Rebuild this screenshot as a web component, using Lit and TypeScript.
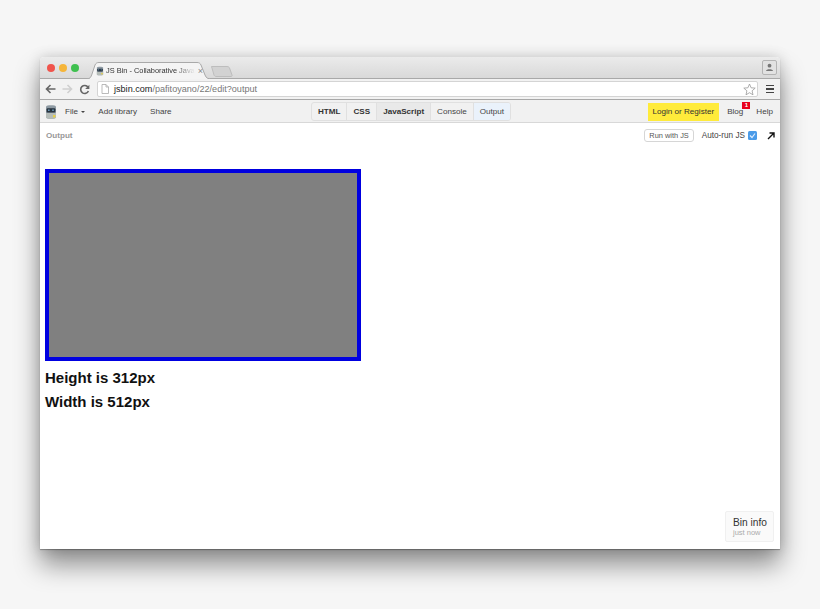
import { LitElement, html, css } from "lit";
import { customElement } from "lit/decorators.js";

const jsbinLogo = (w: number, h: number) => html`
  <svg width=${w} height=${h} viewBox="0 0 12 16">
    <path d="M1 2.5C1 .8 11 .8 11 2.5V13.5C11 15.3 1 15.3 1 13.5Z" fill="#8e9aa3"/>
    <path d="M1 9H11V13.5C11 15.3 1 15.3 1 13.5Z" fill="#b5bcb8"/>
    <rect x="1.6" y="4.2" width="8.8" height="4.4" rx="1" fill="#27333f"/>
    <rect x="3" y="5.6" width="1.6" height="1.2" fill="#7fb4d8"/>
    <rect x="7.2" y="5.6" width="1.6" height="1.2" fill="#7fb4d8"/>
    <rect x="8" y="11" width="2.4" height="2.4" fill="#e6cf4a"/>
  </svg>
`;

@customElement("app-root")
export class AppRoot extends LitElement {
  static styles = css`
    :host {
      display: block;
      height: 609px;
      overflow: hidden;
      background: #f6f6f6;
      font-family: "Liberation Sans", Arial, sans-serif;
      color: #333;
      padding: 57px 40px 0;
      box-sizing: border-box;
    }

    .window {
      width: 740px;
      height: 492px;
      display: flex;
      flex-direction: column;
      background: #fff;
      border-radius: 4px 4px 0 0;
      box-shadow:
        0 1px 1px rgba(0, 0, 0, 0.3),
        0 16px 26px 0 rgba(0, 0, 0, 0.42),
        0 0 14px rgba(0, 0, 0, 0.16);
    }

    /* chrome tab strip */
    .tabstrip {
      height: 22px;
      flex: none;
      display: flex;
      align-items: flex-end;
      background: linear-gradient(#ebebeb, #d9d9d9);
      border-radius: 4px 4px 0 0;
      border-bottom: 1px solid #a9a9a9;
      box-sizing: border-box;
    }

    .lights {
      display: flex;
      gap: 4px;
      margin: 0 0 0 7px;
      align-self: flex-start;
      padding-top: 7px;
    }

    .light {
      width: 8px;
      height: 8px;
      border-radius: 50%;
    }

    .tab {
      position: relative;
      width: 125px;
      height: 17px;
      margin-left: 8px;
      margin-bottom: -1px;
      flex: none;
      display: flex;
      align-items: center;
      font-size: 7.4px;
      color: #333;
    }

    .tab svg.shape {
      position: absolute;
      inset: 0;
    }

    .tab-inner {
      position: relative;
      display: flex;
      align-items: center;
      padding-left: 9px;
      width: 100%;
      box-sizing: border-box;
    }

    .tab-title {
      margin-left: 2px;
      white-space: nowrap;
      -webkit-mask-image: linear-gradient(90deg, #000 78%, transparent);
      mask-image: linear-gradient(90deg, #000 78%, transparent);
    }

    .tab-x {
      font-size: 9px;
      color: #888;
      margin-left: 3px;
    }

    .newtab {
      margin-left: -1px;
      margin-bottom: 1px;
    }

    .profile {
      margin-left: auto;
      margin-right: 3px;
      align-self: flex-start;
      margin-top: 3px;
      width: 15px;
      height: 15px;
      box-sizing: border-box;
      border: 1px solid #b4b4b4;
      border-radius: 2px;
      background: #e2e2e2;
      display: grid;
      place-items: center;
    }

    /* address bar */
    .toolbar {
      height: 21px;
      flex: none;
      display: flex;
      align-items: center;
      background: #f2f2f2;
      border-bottom: 1px solid #a8a8a8;
      box-sizing: border-box;
      padding-left: 5px;
    }

    .nav {
      display: flex;
      align-items: center;
      gap: 6px;
      width: 52px;
      flex: none;
    }

    .omnibox {
      width: 661px;
      height: 16px;
      flex: none;
      background: #fff;
      border: 1px solid #d4d4d4;
      box-sizing: border-box;
      border-radius: 2px;
      display: flex;
      align-items: center;
      padding-left: 3px;
      font-size: 9.1px;
      color: #777;
      gap: 5px;
    }

    .omnibox b {
      font-weight: normal;
      color: #222;
    }

    .omnibox .star {
      margin-left: auto;
      margin-right: 1px;
    }

    .menu {
      margin-left: 8px;
      display: flex;
      flex-direction: column;
      gap: 2px;
    }

    .menu i {
      display: block;
      width: 8px;
      height: 1.5px;
      background: #444;
    }

    /* jsbin bar */
    .jsbar {
      height: 23px;
      flex: none;
      display: flex;
      align-items: center;
      background: #f1f1f1;
      border-bottom: 1px solid #d8d8d8;
      box-sizing: border-box;
      padding-top: 1px;
      font-size: 8.1px;
      color: #444;
    }

    .logo {
      margin-left: 5px;
      display: flex;
    }

    .left {
      display: flex;
      gap: 13px;
      margin-left: 8px;
      width: 246px;
    }

    .file-caret {
      display: inline-block;
      border: 2px solid transparent;
      border-top: 2.5px solid #444;
      border-bottom: 0;
      vertical-align: middle;
      margin-left: 1px;
    }

    .panels {
      display: flex;
      height: 19px;
      border: 1px solid #e0e0e0;
      border-radius: 3px;
      box-sizing: border-box;
      background: #f1f1f1;
      overflow: hidden;
    }

    .panel {
      display: flex;
      align-items: center;
      padding: 0 6px;
      border-left: 1px solid #e0e0e0;
    }

    .panel:first-child {
      border-left: 0;
    }

    .panel.on {
      font-weight: bold;
      color: #333;
    }

    .panel.on.shade {
      background: #e9e9e9;
    }

    .panel.out {
      background: #eaf2fb;
    }

    .right {
      margin-left: auto;
      display: flex;
      align-items: center;
      padding-right: 7px;
    }

    .login {
      height: 18px;
      display: flex;
      align-items: center;
      padding: 0 5px;
      background: #ffeb3b;
      color: #333;
      margin-right: 8px;
    }

    .blog {
      position: relative;
      margin-right: 13px;
    }

    .badge {
      position: absolute;
      top: -5px;
      right: -7px;
      width: 8px;
      height: 7px;
      background: #e8001c;
      color: #fff;
      font-size: 6px;
      line-height: 7px;
      text-align: center;
      font-weight: bold;
    }

    /* output pane */
    .pane {
      flex: 1;
      position: relative;
      background: #fff;
      display: flex;
      flex-direction: column;
      min-height: 0;
    }

    .pane-head {
      height: 46px;
      flex: none;
      display: flex;
      align-items: flex-start;
      padding: 6px 5px 0 6px;
      box-sizing: border-box;
      font-size: 8.2px;
    }

    .pane-title {
      font-weight: bold;
      color: #999;
      font-size: 8.1px;
      line-height: 13px;
    }

    .controls {
      margin-left: auto;
      display: flex;
      align-items: center;
      color: #444;
    }

    .run {
      height: 13px;
      box-sizing: border-box;
      border: 1px solid #d6d6d6;
      border-radius: 3px;
      padding: 0 4px;
      font-size: 7.4px;
      line-height: 11px;
      color: #555;
      background: #fff;
      margin-right: 8px;
    }

    .check {
      width: 9px;
      height: 9px;
      background: #4a9be8;
      border-radius: 1.5px;
      margin: 0 10px 0 3px;
      display: grid;
      place-items: center;
    }

    .demo {
      padding-left: 5px;
    }

    .box {
      width: 316px;
      height: 192px;
      box-sizing: border-box;
      border: 4px solid #0000e0;
      background: #808080;
    }

    .demo h3 {
      margin: 0;
      font-size: 15px;
      line-height: 24px;
      font-weight: bold;
      color: #111;
    }

    .demo h3:first-of-type {
      margin-top: 5px;
    }

    .bininfo {
      position: absolute;
      right: 6px;
      bottom: 7px;
      width: 49px;
      height: 31px;
      box-sizing: border-box;
      background: #fafafa;
      border: 1px solid #f0f0f0;
      border-radius: 2px;
      padding: 5px 0 0 7px;
      font-size: 10.2px;
      line-height: 11px;
      color: #333;
    }

    .bininfo small {
      display: block;
      font-size: 7.5px;
      line-height: 9px;
      color: #aaa;
    }
  `;

  render() {
    return html`
      <div class="window">
        <div class="tabstrip">
          <div class="lights">
            <span class="light" style="background:#f0544c"></span>
            <span class="light" style="background:#f5b53a"></span>
            <span class="light" style="background:#3fc04f"></span>
          </div>
          <div class="tab">
            <svg class="shape" width="125" height="17" viewBox="0 0 125 17">
              <path d="M0 17C3 17 4 15 5 12L8 3C9 1 10 .5 12 .5H110C112 .5 113 1 114 3L118 13C119 16 121 17 125 17" fill="#f4f4f4" stroke="#a9a9a9"/>
            </svg>
            <div class="tab-inner">
              ${jsbinLogo(8, 10)}
              <span class="tab-title">JS Bin - Collaborative Java</span>
              <span class="tab-x">×</span>
            </div>
          </div>
          <svg class="newtab" width="22" height="11" viewBox="0 0 22 11">
            <path d="M.5 .5H16C17.5 .5 18 1 18.5 2L21 9C21.5 10 20.5 10.5 20 10.5H5C4 10.5 3.5 10 3 9Z" fill="#d2d2d2" stroke="#bdbdbd"/>
          </svg>
          <div class="profile">
            <svg width="9" height="9" viewBox="0 0 9 9">
              <circle cx="4.5" cy="2.7" r="1.9" fill="#777"/>
              <path d="M1 8C1 5.8 8 5.8 8 8Z" fill="#777"/>
            </svg>
          </div>
        </div>

        <div class="toolbar">
          <div class="nav">
            <svg width="11" height="10" viewBox="0 0 11 10"><path d="M10.5 5H2M5.5 1 1.5 5l4 4" fill="none" stroke="#666" stroke-width="1.6"/></svg>
            <svg width="11" height="10" viewBox="0 0 11 10"><path d="M.5 5H9M5.5 1l4 4-4 4" fill="none" stroke="#cfcfcf" stroke-width="1.6"/></svg>
            <svg width="11" height="11" viewBox="0 0 11 11"><path d="M9 3.2A4 4 0 1 0 9.4 7" fill="none" stroke="#666" stroke-width="1.6"/><path d="M10.4 .8V5H6.2Z" fill="#666"/></svg>
          </div>
          <div class="omnibox">
            <svg width="8" height="10" viewBox="0 0 8 10"><path d="M1 .5H5L7.5 3V9.5H1ZM5 .5V3H7.5" fill="#fff" stroke="#aaa" stroke-width=".8"/></svg>
            <span><b>jsbin.com</b>/pafitoyano/22/edit?output</span>
            <svg class="star" width="13" height="13" viewBox="0 0 13 13"><path d="M6.5 1 8.1 4.8 12.2 5.1 9.1 7.8 10 11.8 6.5 9.7 3 11.8 3.9 7.8 .8 5.1 4.9 4.8Z" fill="#fff" stroke="#999" stroke-width=".8"/></svg>
          </div>
          <div class="menu"><i></i><i></i><i></i></div>
        </div>

        <div class="jsbar">
          <span class="logo">${jsbinLogo(12, 16)}</span>
          <div class="left">
            <span>File <span class="file-caret"></span></span>
            <span>Add library</span>
            <span>Share</span>
          </div>
          <div class="panels">
            <span class="panel on">HTML</span>
            <span class="panel on">CSS</span>
            <span class="panel on shade">JavaScript</span>
            <span class="panel">Console</span>
            <span class="panel out">Output</span>
          </div>
          <div class="right">
            <span class="login">Login or Register</span>
            <span class="blog">Blog<span class="badge">1</span></span>
            <span>Help</span>
          </div>
        </div>

        <div class="pane">
          <div class="pane-head">
            <span class="pane-title">Output</span>
            <div class="controls">
              <span class="run">Run with JS</span>
              <span>Auto-run JS</span>
              <span class="check">
                <svg width="7" height="7" viewBox="0 0 7 7"><path d="M1 3.5 3 5.5 6 1.5" fill="none" stroke="#dcecff" stroke-width="1.2"/></svg>
              </span>
              <svg width="8" height="8" viewBox="0 0 8 8"><path d="M1 7 6.5 1.5M2.5 1H7V5.5" fill="none" stroke="#111" stroke-width="1.4"/></svg>
            </div>
          </div>
          <div class="demo">
            <div class="box"></div>
            <h3>Height is 312px</h3>
            <h3>Width is 512px</h3>
          </div>
          <div class="bininfo">Bin info<small>just now</small></div>
        </div>
      </div>
    `;
  }
}
